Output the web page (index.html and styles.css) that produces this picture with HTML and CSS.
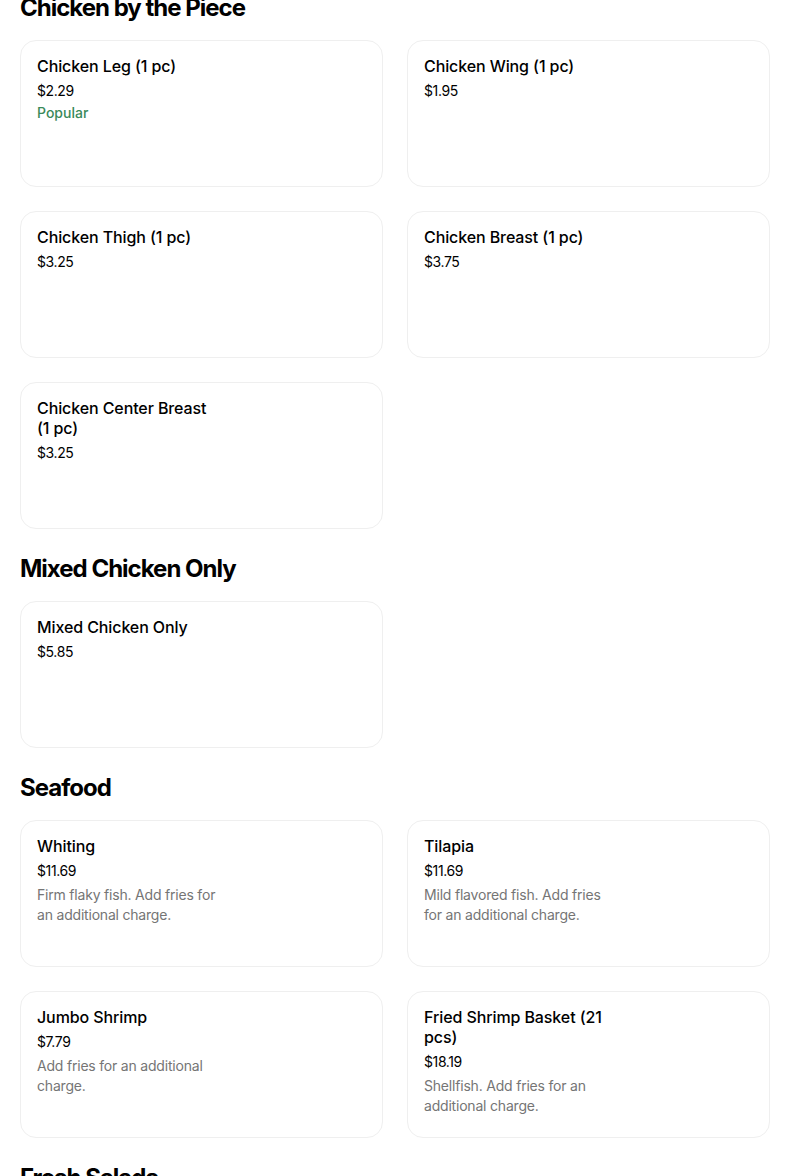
FILE: index.html
```html
<!DOCTYPE html>
<html lang="en">
<head>
<meta charset="utf-8">
<title>Menu</title>
<link rel="stylesheet" href="styles.css">
</head>
<body>
<main class="menu">
  <section class="section">
    <h2 class="section-title">Chicken by the Piece</h2>
    <div class="grid">
      <div class="card"><div class="info"><div class="name">Chicken Leg (1 pc)</div><div class="price">$2.29</div><div class="badge">Popular</div></div></div>
      <div class="card"><div class="info"><div class="name">Chicken Wing (1 pc)</div><div class="price">$1.95</div></div></div>
      <div class="card"><div class="info"><div class="name">Chicken Thigh (1 pc)</div><div class="price">$3.25</div></div></div>
      <div class="card"><div class="info"><div class="name">Chicken Breast (1 pc)</div><div class="price">$3.75</div></div></div>
      <div class="card"><div class="info"><div class="name">Chicken Center Breast (1 pc)</div><div class="price">$3.25</div></div></div>
    </div>
  </section>
  <section class="section">
    <h2 class="section-title">Mixed Chicken Only</h2>
    <div class="grid">
      <div class="card"><div class="info"><div class="name">Mixed Chicken Only</div><div class="price">$5.85</div></div></div>
    </div>
  </section>
  <section class="section">
    <h2 class="section-title">Seafood</h2>
    <div class="grid">
      <div class="card"><div class="info"><div class="name">Whiting</div><div class="price">$11.69</div><div class="desc">Firm flaky fish. Add fries for an additional charge.</div></div></div>
      <div class="card"><div class="info"><div class="name">Tilapia</div><div class="price">$11.69</div><div class="desc">Mild flavored fish. Add fries for an additional charge.</div></div></div>
      <div class="card"><div class="info"><div class="name">Jumbo Shrimp</div><div class="price">$7.79</div><div class="desc">Add fries for an additional charge.</div></div></div>
      <div class="card"><div class="info"><div class="name">Fried Shrimp Basket (21 pcs)</div><div class="price">$18.19</div><div class="desc">Shellfish. Add fries for an additional charge.</div></div></div>
    </div>
  </section>
  <section class="section">
    <h2 class="section-title">Fresh Salads</h2>
  </section>
</main>
</body>
</html>
```
FILE: styles.css
```css
html, body {
  margin: 0;
  padding: 0;
  background: #ffffff;
}
body {
  font-family: Inter, "Noto Sans", Roboto, sans-serif;
  color: #000000;
  overflow: hidden;
}
.menu {
  padding: 0 34px 0 20px;
  margin-top: -8px;
}
.section {
  padding-bottom: 24px;
}
.section-title {
  margin: 0 0 16px 0;
  font-size: 24px;
  line-height: 32px;
  font-weight: 700;
  letter-spacing: -1px;
}
.grid {
  display: grid;
  grid-template-columns: 1fr 1fr;
  gap: 24px;
}
.card {
  height: 147px;
  box-sizing: border-box;
  border: 1px solid #efefef;
  border-radius: 16px;
  padding: 15px 16px 16px;
}
.info {
  max-width: 182px;
}
.name {
  font-size: 16px;
  line-height: 20px;
  font-weight: 500;
  letter-spacing: -0.1px;
}
.price {
  margin-top: 5px;
  font-size: 14px;
  line-height: 20px;
  letter-spacing: -0.4px;
  color: #000000;
}
.badge {
  margin-top: 2px;
  font-size: 14px;
  line-height: 20px;
  font-weight: 500;
  color: #3a8a5a;
}
.desc {
  margin-top: 4px;
  font-size: 14px;
  line-height: 20px;
  color: #757575;
  letter-spacing: -0.2px;
}
```
